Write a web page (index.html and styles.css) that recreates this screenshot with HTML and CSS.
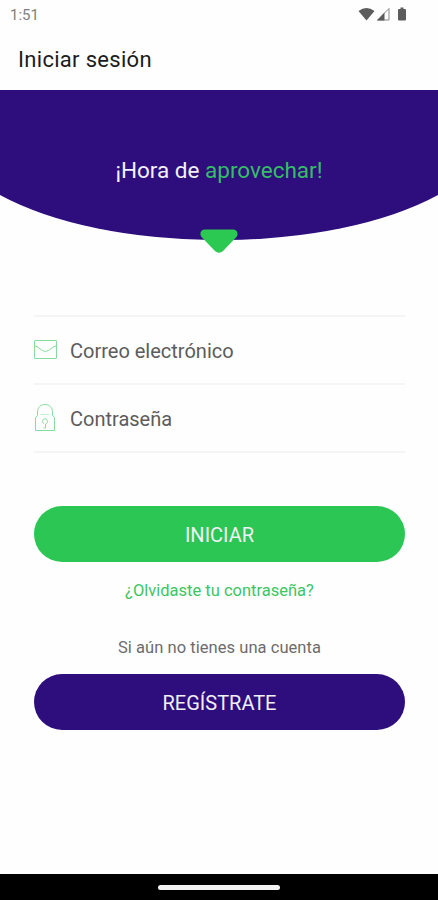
FILE: index.html
```html
<!DOCTYPE html>
<html lang="es">
<head>
    <meta charset="UTF-8">
    <meta name="viewport" content="width=device-width, initial-scale=1.0">
    <title>Iniciar sesión</title>
    <link rel="stylesheet" href="styles.css">
</head>
<body>
    <div class="screen">
        <div class="status-bar">
            <span class="clock">1:51</span>
            <svg class="status-icons" width="52" height="16" viewBox="0 0 52 16">
                <path d="M0.5 4Q8.500 -2 16.500 4L8.500 13.500Z" fill="#5c5c5c"/>
                <path d="M19.500 13L31 1.500V13Z" fill="#fff" stroke="#888"/>
                <path d="M19 13.500L26.500 5.500V13.500Z" fill="#5c5c5c"/>
                <path d="M41 2H42.500V0.500H45.500V2H47Q48 2 48 3V12.500Q48 13.500 47 13.500H41Q40 13.500 40 12.500V3Q40 2 41 2Z" fill="#5c5c5c"/>
            </svg>
        </div>
        <header class="app-bar">
            <h1>Iniciar sesión</h1>
        </header>
        <div class="hero">
            <svg class="hero-shape" width="438" height="150" viewBox="0 0 438 150">
                <path d="M0 0H438V105A275 114 0 0 1 0 105Z" fill="#2e0d7c"/>
            </svg>
            <p class="slogan">¡Hora de <span>aprovechar!</span></p>
            <svg class="hero-arrow" width="38" height="25" viewBox="0 0 38 25">
                <path d="M5 0.5H33C37.5 0.5 39 5 36 8.5L24 21C20.5 24.700 17.500 24.700 14 21L2 8.500C-1 5 0.500 0.500 5 0.500Z" fill="#2bc852"/>
            </svg>
        </div>
        <form class="login-form">
            <label class="field">
                <svg width="24" height="30" viewBox="0 0 24 30" fill="none" stroke="#86dc9d">
                    <rect x="0.500" y="5.500" width="22" height="18" rx="0.500"/>
                    <path d="M0.500 11L3 11.500L8.500 15.500Q11.500 17.500 14.500 15.500L20 11.500L22.500 11"/>
                </svg>
                <input type="text" placeholder="Correo electrónico">
            </label>
            <label class="field">
                <svg width="24" height="30" viewBox="0 0 24 30" fill="none" stroke="#86dc9d">
                    <path d="M3.500 12.500V9C3.500 4.500 6.500 1.500 11 1.500S18.500 4.500 18.500 9V12.500L20.500 14.500V27.500H1.500V14.500Z"/>
                    <path d="M6.500 11.500H15.500" stroke="#c0edcc"/>
                    <path d="M9.800 20.500A2.500 2.500 0 1 1 12.200 20.500L11.500 21V25H9.500"/>
                </svg>
                <input type="password" placeholder="Contraseña">
            </label>
            <button type="button" class="btn btn-login">INICIAR</button>
            <a class="forgot">¿Olvidaste tu contraseña?</a>
            <p class="no-account">Si aún no tienes una cuenta</p>
            <button type="button" class="btn btn-register">REGÍSTRATE</button>
        </form>
        <div class="nav-bar">
            <div class="nav-handle"></div>
        </div>
    </div>
</body>
</html>
```
FILE: styles.css
```css
* {
    box-sizing: border-box;
}
body {
    margin: 0;
    background-color: #fefefe;
    font-family: Roboto, sans-serif;
}
.screen {
    display: flex;
    flex-direction: column;
    width: 438px;
    height: 900px;
    overflow: hidden;
}
.status-bar {
    display: flex;
    justify-content: space-between;
    align-items: center;
    height: 29px;
    padding: 0 28px 0 10px;
}
.clock {
    color: #808080;
    font-size: 15px;
}
.app-bar {
    display: flex;
    align-items: center;
    height: 61px;
    padding: 0 18px;
}
.app-bar h1 {
    margin: 0;
    color: #1c1c1c;
    font-size: 22px;
    font-weight: 400;
    letter-spacing: 0.3px;
}
.hero {
    position: relative;
    height: 225px;
    padding-top: 66px;
    text-align: center;
}
/* Curved background behind the slogan */
.hero-shape {
    position: absolute;
    top: 0;
    left: 0;
}
.hero-arrow {
    position: absolute;
    top: 139px;
    left: 200px;
}
.slogan {
    position: relative;
    margin: 0;
    color: #f4f1fa;
    font-size: 22.5px;
    line-height: 28px;
}
.slogan span {
    color: #35bd67;
}
.login-form {
    display: flex;
    flex-direction: column;
    flex: 1;
    padding: 0 33px 0 34px;
}
.field {
    display: flex;
    align-items: center;
    gap: 12px;
    height: 68px;
    border-top: 2px solid #f5f5f5;
}
.field + .field {
    height: 70px;
    border-bottom: 2px solid #f5f5f5;
}
.field input {
    flex: 1;
    padding: 1px 0 0;
    border: none;
    outline: none;
    background: none;
    font-family: inherit;
    font-size: 20px;
}
.field input::placeholder {
    color: #5c5c5c;
}
.btn {
    flex-shrink: 0;
    height: 56px;
    padding: 2px 0 0;
    border: none;
    border-radius: 28px;
    color: #f0f0f6;
    font-family: inherit;
    font-size: 20px;
}
.btn-login {
    margin-top: 53px;
    background-color: #2bc653;
}
.forgot {
    margin-top: 18px;
    color: #3cc563;
    font-size: 16.5px;
    line-height: 22px;
    text-align: center;
}
.no-account {
    margin: 35px 0 15px;
    color: #6c6c6c;
    font-size: 16.5px;
    letter-spacing: 0.05px;
    line-height: 22px;
    text-align: center;
}
.btn-register {
    background-color: #2e0d7c;
}
.nav-bar {
    display: flex;
    justify-content: center;
    align-items: center;
    height: 26px;
    background-color: #000;
}
.nav-handle {
    width: 122px;
    height: 5px;
    border-radius: 3px;
    background-color: #f2f2f2;
}
```
